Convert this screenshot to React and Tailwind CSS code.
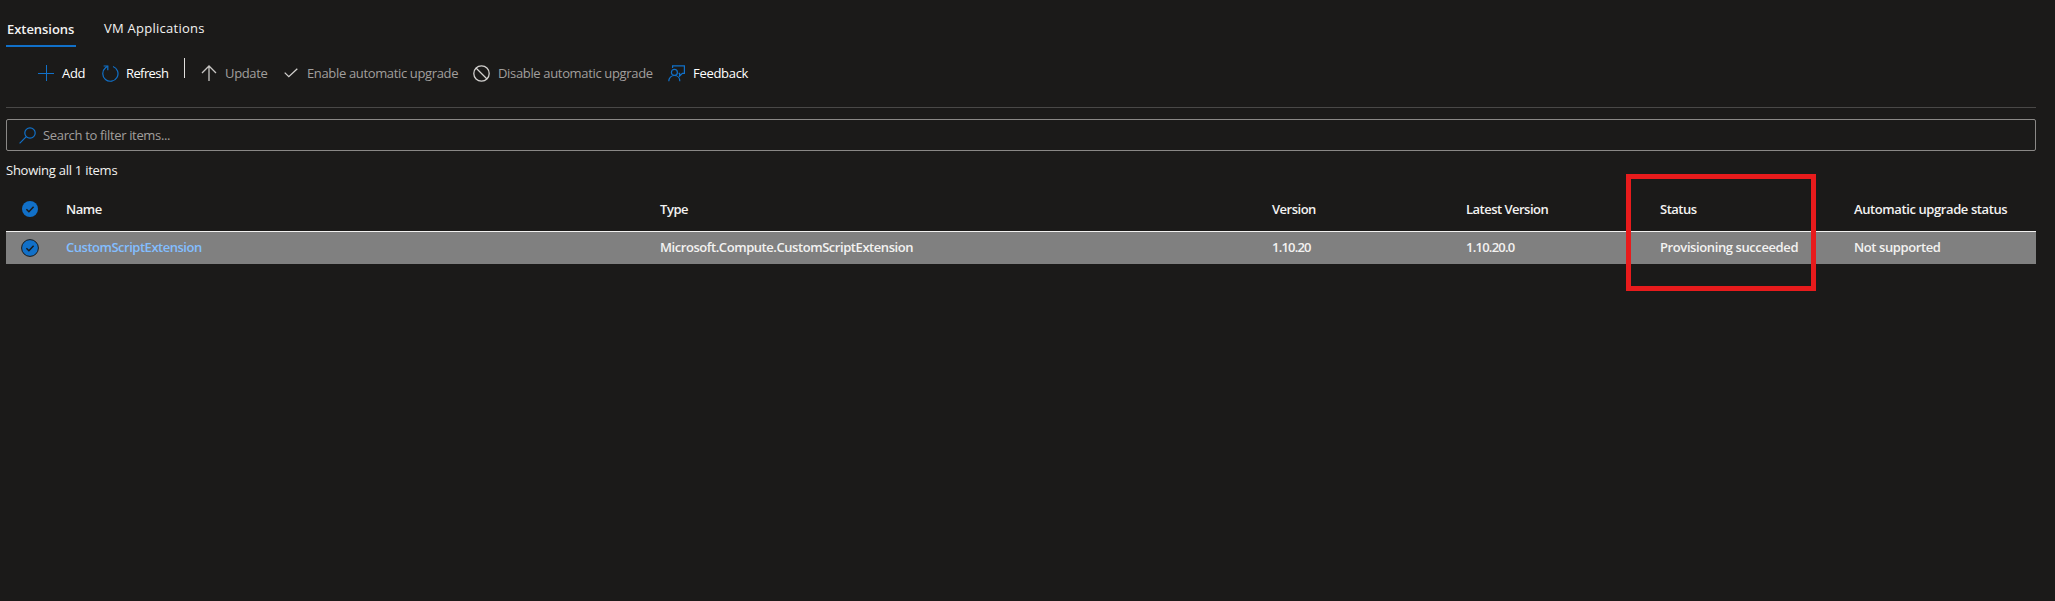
import React from "react";

const blue = "#1170c8";

function PlusIcon() {
  return (
    <svg width="16" height="16" viewBox="0 0 16 16" fill="none" stroke={blue} strokeWidth="1">
      <path d="M8.5 0v16M0 8.5h16" />
    </svg>
  );
}

function RefreshIcon() {
  return (
    <svg width="18" height="17" viewBox="0 0 18 17" fill="none" stroke={blue} strokeWidth="1.2">
      <path d="M12 1.500A7.600 7.600 0 1 1 4.500 2.800L6.500 1.200" />
      <path d="M2.600 1h4.200v4.200" />
    </svg>
  );
}

function ArrowUpIcon() {
  return (
    <svg width="16" height="16" viewBox="0 0 16 16" fill="none" stroke="#c8c6c4" strokeWidth="1.3">
      <path d="M8 16V1M1 8l7-7 7 7" />
    </svg>
  );
}

function CheckIcon() {
  return (
    <svg width="14" height="10" viewBox="0 0 14 10" fill="none" stroke="#d2d0ce" strokeWidth="1.3">
      <path d="M.7 4.6l4.1 4.1L13.3.7" />
    </svg>
  );
}

function BlockedIcon() {
  return (
    <svg width="17" height="17" viewBox="0 0 17 17" fill="none" stroke="#d2d0ce" strokeWidth="1.3">
      <circle cx="8.5" cy="8.5" r="7.7" />
      <path d="M3 3l11 11" />
    </svg>
  );
}

function FeedbackIcon() {
  return (
    <svg width="17" height="17" viewBox="0 0 17 17" fill="none" stroke={blue} strokeWidth="1.2">
      <path d="M4.600 3V.8h11.800v7.600h-2L11.600 11V8.400h-1" />
      <circle cx="6.400" cy="7.400" r="3" />
      <path d="M.8 16.200c0-3.300 2.400-5.700 5.600-5.700s5.400 2.400 5.400 5.700" />
    </svg>
  );
}

function SearchIcon() {
  return (
    <svg width="17" height="17" viewBox="0 0 17 17" fill="none" stroke={blue} strokeWidth="1.2">
      <circle cx="11" cy="6" r="5.200" />
      <path d="M7.300 9.700L.6 16.400" />
    </svg>
  );
}

function CheckedCircle({ ring }) {
  return (
    <svg width="18" height="18" viewBox="0 0 18 18" fill="none">
      <circle cx="9" cy="9" r={ring ? 8.4 : 8} fill={blue} stroke={ring ? "#1b1a19" : "none"} strokeWidth="1" />
      <path d="M5.400 9.200l2.500 2.500 4.700-5" stroke="#1b1a19" strokeWidth="1.500" />
    </svg>
  );
}

function Command({ icon, label, className, iconClass }) {
  return (
    <button className={`flex shrink-0 items-center whitespace-nowrap ${className}`}>
      <span className={`flex shrink-0 ${iconClass}`}>{icon}</span>
      <span>{label}</span>
    </button>
  );
}

const grid = "grid grid-cols-[60px_594px_612px_194px_194px_194px_182px] items-center whitespace-nowrap font-semibold";

export default function App() {
  return (
    <div className="relative h-[601px] w-[2055px] overflow-hidden bg-[#1b1a19] pl-1.5 font-['Open_Sans','Noto_Sans',sans-serif] text-[13px] leading-[18px] text-[#f3f2f1]">
      <nav className="flex h-[47px] items-end whitespace-nowrap">
        <div className="h-[28px] w-[70px] border-b-2 border-[#1170c8] pl-px pt-px font-semibold tracking-[-0.05px]">
          Extensions
        </div>
        <div className="ml-7 h-[28px] tracking-[0.26px]">VM Applications</div>
      </nav>

      <div className="flex h-[61px] w-[2030px] items-start border-b border-[#494847] pt-[11px]">
        <div className="flex items-center pt-[6px] text-white">
          <Command icon={<PlusIcon />} label="Add" className="ml-8 w-[63px] tracking-[-0.3px]" iconClass="mr-2" />
          <Command icon={<RefreshIcon />} label="Refresh" className="w-[83px] tracking-[-0.6px]" iconClass="mr-[7px]" />
        </div>
        <div className="h-5 w-px bg-[#e1dfdd]" />
        <div className="flex items-center pt-[6px] text-[#a19f9d]">
          <Command icon={<ArrowUpIcon />} label="Update" className="ml-[16px] w-[83px] tracking-[-0.35px]" iconClass="mr-2" />
          <Command icon={<CheckIcon />} label="Enable automatic upgrade" className="w-[189px] tracking-[-0.35px]" iconClass="mr-[9px]" />
          <Command icon={<BlockedIcon />} label="Disable automatic upgrade" className="w-[195px] tracking-[-0.34px]" iconClass="mr-2" />
          <Command icon={<FeedbackIcon />} label="Feedback" className="text-white tracking-[-0.3px]" iconClass="mr-2" />
        </div>
      </div>

      <div className="mt-[11px] flex h-8 w-[2030px] items-center rounded-[2px] border border-[#8a8886] pl-3 text-[#a19f9d]">
        <SearchIcon />
        <span className="ml-[7px] tracking-[-0.34px]">Search to filter items...</span>
      </div>

      <div className="mt-[10px] tracking-[-0.25px]">Showing all 1 items</div>

      <div className="mt-[11px] w-[2030px]">
        <div className={`${grid} h-[41px] pb-1`}>
          <span className="pl-[15px]"><CheckedCircle /></span>
          <span className="tracking-[-0.5px]">Name</span>
          <span className="tracking-[-0.45px]">Type</span>
          <span className="tracking-[-0.5px]">Version</span>
          <span className="tracking-[-0.52px]">Latest Version</span>
          <span className="tracking-[-0.5px]">Status</span>
          <span className="tracking-[-0.4px]">Automatic upgrade status</span>
        </div>
        <div className={`${grid} h-[33px] border-t border-[#f3f2f1] bg-[#808080] pb-[2px]`}>
          <span className="pl-[15px] pt-px"><CheckedCircle ring /></span>
          <a className="text-[#83beff] tracking-[-0.48px]">CustomScriptExtension</a>
          <span className="tracking-[-0.44px]">Microsoft.Compute.CustomScriptExtension</span>
          <span className="tracking-[-0.8px]">1.10.20</span>
          <span className="tracking-[-0.75px]">1.10.20.0</span>
          <span className="tracking-[-0.4px]">Provisioning succeeded</span>
          <span className="tracking-[-0.4px]">Not supported</span>
        </div>
      </div>

      <div className="pointer-events-none absolute left-[1626px] top-[174px] h-[117px] w-[190px] border-5 border-[#e81b1c]" />
    </div>
  );
}
